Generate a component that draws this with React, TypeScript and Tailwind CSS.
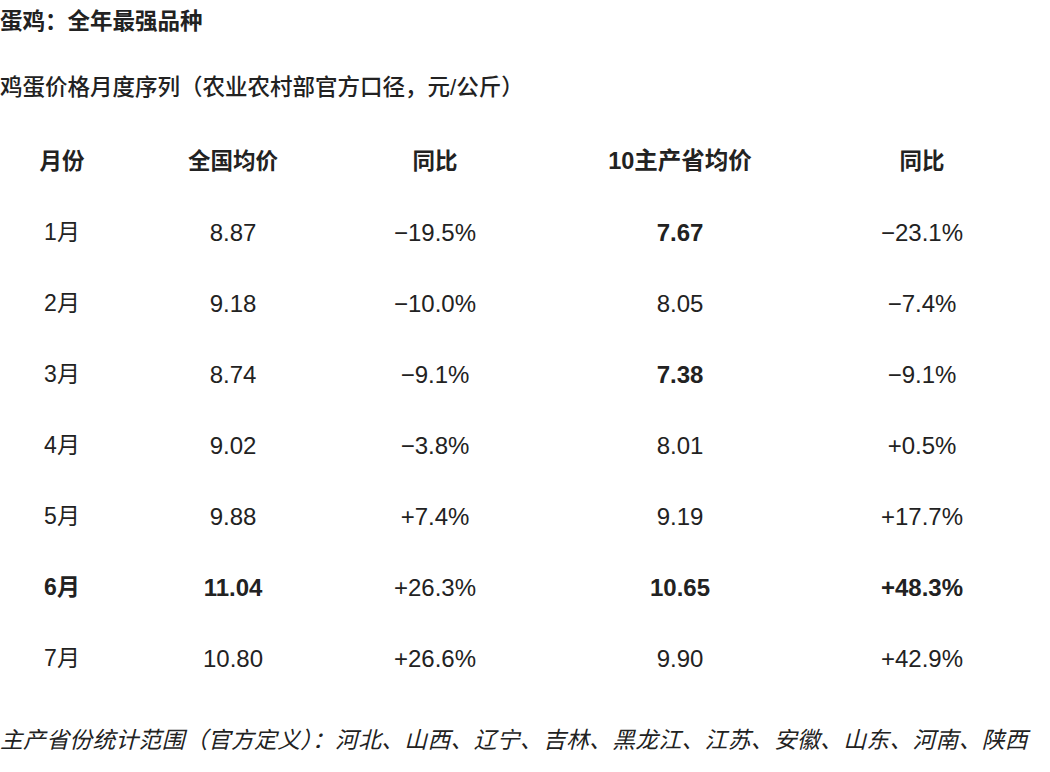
const rows: { m: string; a: string; b: string; c: string; d: string; bold?: boolean; cBold?: boolean }[] = [
  { m: "1月", a: "8.87", b: "−19.5%", c: "7.67", d: "−23.1%", cBold: true },
  { m: "2月", a: "9.18", b: "−10.0%", c: "8.05", d: "−7.4%" },
  { m: "3月", a: "8.74", b: "−9.1%", c: "7.38", d: "−9.1%", cBold: true },
  { m: "4月", a: "9.02", b: "−3.8%", c: "8.01", d: "+0.5%" },
  { m: "5月", a: "9.88", b: "+7.4%", c: "9.19", d: "+17.7%" },
  { m: "6月", a: "11.04", b: "+26.3%", c: "10.65", d: "+48.3%", bold: true },
  { m: "7月", a: "10.80", b: "+26.6%", c: "9.90", d: "+42.9%" },
]

const grid = "grid grid-cols-[124px_218px_186px_304px_180px] h-[71px] items-center text-center"

export default function App() {
  return (
    <div className="w-[1050px] h-[772px] overflow-hidden bg-white text-[#222] text-[22.5px] font-['Liberation_Sans','Noto_Sans_CJK_SC',sans-serif]">
      <div className="h-[44px] leading-[44px] font-bold">蛋鸡：全年最强品种</div>
      <div className="mt-[22px] h-[44px] leading-[44px] font-medium">鸡蛋价格月度序列（农业农村部官方口径，元/公斤）</div>

      <div className="mt-[16px]">
        <div className={`${grid} font-bold`}>
          <div>月份</div>
          <div>全国均价</div>
          <div>同比</div>
          <div className="text-[23.5px]">10主产省均价</div>
          <div>同比</div>
        </div>
        {rows.map((r) => (
          <div key={r.m} className={`${grid} text-[24px]`}>
            <div className={`text-[23px] ${r.bold ? "font-bold" : ""}`}>{r.m}</div>
            <div className={r.bold ? "font-bold" : ""}>{r.a}</div>
            <div>{r.b}</div>
            <div className={r.bold || r.cBold ? "font-bold" : ""}>{r.c}</div>
            <div className={r.bold ? "font-bold" : ""}>{r.d}</div>
          </div>
        ))}
      </div>

      <div className="mt-[24px] h-[44px] leading-[44px] italic text-[22.8px] tracking-[0.3px] whitespace-nowrap">
        主产省份统计范围（官方定义）：河北、山西、辽宁、吉林、黑龙江、江苏、安徽、山东、河南、陕西
      </div>
    </div>
  )
}
